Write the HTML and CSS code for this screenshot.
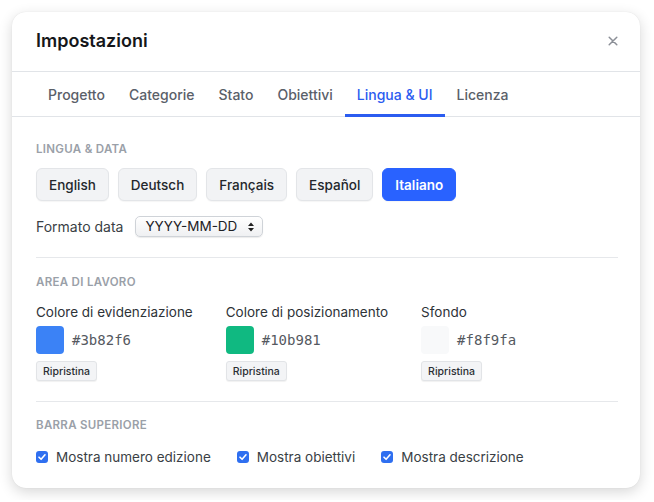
FILE: index.html
```html
<!DOCTYPE html>
<html>
<head>
    <title>Impostazioni</title>
    <link rel="stylesheet" href="styles.css">
</head>
<body>
    <div class="dialog">
        <div class="dialog-header">
            <h2>Impostazioni</h2>
            <button class="close-btn" aria-label="Chiudi">
                <svg width="10" height="10" viewBox="0 0 10 10"><path d="M1.2 1.2L8.8 8.8M8.8 1.2L1.2 8.8" stroke="#8b8f97" stroke-width="1.5" stroke-linecap="round"/></svg>
            </button>
        </div>

        <div class="tabs">
            <span class="tab">Progetto</span>
            <span class="tab">Categorie</span>
            <span class="tab">Stato</span>
            <span class="tab">Obiettivi</span>
            <span class="tab active">Lingua &amp; UI</span>
            <span class="tab">Licenza</span>
        </div>

        <div class="dialog-body">
            <div class="section first">
                <div class="section-title">Lingua &amp; data</div>
                <div class="lang-row">
                    <button class="lang-btn">English</button>
                    <button class="lang-btn">Deutsch</button>
                    <button class="lang-btn">Français</button>
                    <button class="lang-btn">Español</button>
                    <button class="lang-btn selected">Italiano</button>
                </div>
                <div class="date-row">
                    <span>Formato data</span>
                    <span class="select">
                        YYYY-MM-DD
                        <svg width="8" height="12" viewBox="0 0 8 12"><path d="M4 1.5L7 5H1Z M4 10.5L1 7H7Z" fill="#222"/></svg>
                    </span>
                </div>
            </div>

            <div class="section">
                <div class="section-title">Area di lavoro</div>
                <div class="color-row">
                    <div class="color-item">
                        <div class="color-label">Colore di evidenziazione</div>
                        <div class="color-value">
                            <span class="swatch" style="background: #3b82f6"></span>
                            <code>#3b82f6</code>
                        </div>
                        <button class="reset-btn">Ripristina</button>
                    </div>
                    <div class="color-item">
                        <div class="color-label">Colore di posizionamento</div>
                        <div class="color-value">
                            <span class="swatch" style="background: #10b981"></span>
                            <code>#10b981</code>
                        </div>
                        <button class="reset-btn">Ripristina</button>
                    </div>
                    <div class="color-item">
                        <div class="color-label">Sfondo</div>
                        <div class="color-value">
                            <span class="swatch" style="background: #f8f9fa"></span>
                            <code>#f8f9fa</code>
                        </div>
                        <button class="reset-btn">Ripristina</button>
                    </div>
                </div>
            </div>

            <div class="section">
                <div class="section-title">Barra superiore</div>
                <div class="check-row">
                    <label><span class="check"><svg width="10" height="10" viewBox="0 0 10 10"><path d="M2 5.2L4.1 7.3L8 2.8" stroke="#fff" stroke-width="1.6" fill="none" stroke-linecap="round" stroke-linejoin="round"/></svg></span>Mostra numero edizione</label>
                    <label><span class="check"><svg width="10" height="10" viewBox="0 0 10 10"><path d="M2 5.2L4.1 7.3L8 2.8" stroke="#fff" stroke-width="1.6" fill="none" stroke-linecap="round" stroke-linejoin="round"/></svg></span>Mostra obiettivi</label>
                    <label><span class="check"><svg width="10" height="10" viewBox="0 0 10 10"><path d="M2 5.2L4.1 7.3L8 2.8" stroke="#fff" stroke-width="1.6" fill="none" stroke-linecap="round" stroke-linejoin="round"/></svg></span>Mostra descrizione</label>
                </div>
            </div>
        </div>
    </div>
</body>
</html>
```

FILE: styles.css
```css
body {
    font-family: Inter, "Noto Sans", sans-serif;
    background-color: #ffffff;
    margin: 0;
    padding: 12px;
    color: #1f2328;
}

.dialog {
    width: 628px;
    height: 476px;
    background: #ffffff;
    border-radius: 14px;
    box-shadow: 0 4px 14px rgba(0, 0, 0, 0.16), 0 0 1px rgba(0, 0, 0, 0.12);
    overflow: hidden;
}

.dialog-header {
    height: 60px;
    padding: 0 24px 2px;
    display: flex;
    align-items: center;
    justify-content: space-between;
    border-bottom: 1px solid #e1e4e8;
    box-sizing: border-box;
}

h2 {
    margin: 0;
    font-size: 18px;
    font-weight: 600;
    color: #15171a;
}

.close-btn {
    background: none;
    border: none;
    padding: 4px;
    margin-right: -6px;
    cursor: pointer;
    display: flex;
}

.tabs {
    display: flex;
    padding: 0 24px;
    border-bottom: 1px solid #e1e4e8;
    height: 45px;
    box-sizing: border-box;
}

.tab {
    padding: 2px 12px 0;
    font-size: 14px;
    font-weight: 500;
    color: #5a6069;
    display: flex;
    align-items: center;
    border-bottom: 3px solid transparent;
    margin-bottom: -1px;
}

.tab.active {
    color: #2b5cf0;
    border-bottom-color: #2b5cf0;
}

.dialog-body {
    padding: 0 22px 0 24px;
}

.section {
    padding: 17px 0 20px;
    border-bottom: 1px solid #e6e8eb;
}

.section.first {
    padding: 25px 0 20px;
}

.section:last-child {
    border-bottom: none;
    padding-top: 16px;
}

.section-title {
    font-size: 11.5px;
    line-height: 14px;
    font-weight: 600;
    text-transform: uppercase;
    letter-spacing: 0.3px;
    color: #9aa0a8;
    margin-bottom: 15px;
}

.first .section-title {
    margin-bottom: 12px;
}

.lang-row {
    display: flex;
    gap: 9px;
}

.lang-btn {
    font-family: inherit;
    font-size: 13.5px;
    font-weight: 500;
    color: #23272c;
    background: #f2f3f5;
    border: 1px solid #e3e5e8;
    border-radius: 6px;
    height: 33px;
    padding: 0 12px;
    box-shadow: 0 1px 1px rgba(0, 0, 0, 0.04);
}

.lang-btn.selected {
    background: #2962ff;
    border-color: #2962ff;
    color: #ffffff;
    font-weight: 600;
}

.date-row {
    display: flex;
    align-items: center;
    gap: 12px;
    margin-top: 15px;
    font-size: 14px;
    line-height: 21px;
    color: #3a3f45;
}

.select {
    display: inline-flex;
    align-items: center;
    gap: 10px;
    height: 19px;
    padding: 0 7px 0 9px;
    border: 1px solid #cfd3d8;
    border-radius: 5px;
    background: linear-gradient(#ffffff, #eff0f2);
    box-shadow: 0 1px 1px rgba(0, 0, 0, 0.08);
    color: #1d2025;
    font-size: 13.5px;
}

.color-row {
    display: flex;
    gap: 33px;
}

.color-label {
    font-size: 13.5px;
    line-height: 17px;
    color: #2e3338;
    margin-bottom: 5px;
}

.color-value {
    display: flex;
    align-items: center;
    gap: 8px;
}

.swatch {
    width: 28px;
    height: 28px;
    border-radius: 4px;
    display: inline-block;
}

code {
    font-family: "DejaVu Sans Mono", "Liberation Mono", monospace;
    font-size: 14px;
    color: #55595f;
}

.reset-btn {
    margin-top: 7px;
    font-family: inherit;
    font-size: 10.5px;
    font-weight: 500;
    color: #2a2e33;
    background: #f3f4f6;
    border: 1px solid #e2e4e7;
    border-radius: 3px;
    height: 20px;
    padding: 0 6px;
    box-shadow: 0 1px 1px rgba(0, 0, 0, 0.06);
}

.check-row {
    display: flex;
    gap: 26px;
    font-size: 13.5px;
    line-height: 20px;
    color: #3a3f45;
}

.check-row label {
    display: flex;
    align-items: center;
    gap: 8px;
}

.check {
    width: 12px;
    height: 12px;
    border-radius: 3px;
    background: #2f6ff0;
    display: flex;
    align-items: center;
    justify-content: center;
}
```
